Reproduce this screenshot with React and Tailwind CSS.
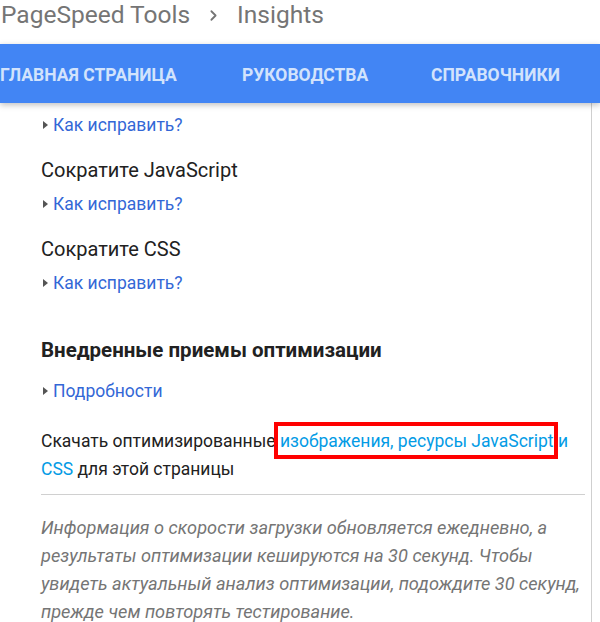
import { ChevronRight } from 'lucide-react';

const Toggle = ({ label, className }) => (
  <div className={`flex items-center text-[17.5px] leading-6 ${className}`}>
    <span className="ml-[2px] mr-[5px] h-0 w-0 border-y-[4px] border-l-[5px] border-y-transparent border-l-[#555]" />
    <a className="text-[#3367d6]">{label}</a>
  </div>
);

export default function App() {
  return (
    <div className="min-h-screen bg-white font-['Roboto',sans-serif] text-[#212121] overflow-hidden">
      {/* Breadcrumb */}
      <div className="flex h-[44px] items-start pl-[1px] text-[24.5px] leading-[30px] text-[#757575]">
        <span>PageSpeed Tools</span>
        <ChevronRight className="mx-[15px] mt-[7px] h-[17px] w-[17px]" strokeWidth={2.5} />
        <span>Insights</span>
      </div>

      {/* Nav */}
      <nav className="relative z-10 flex h-[59px] items-center pt-[3px] bg-[#4285f4] text-[17.5px] font-bold uppercase text-[#d2e3fc] shadow-[0_2px_6px_rgba(0,0,0,0.25)]">
        <span className="w-[242px]">Главная страница</span>
        <span className="w-[189px]">Руководства</span>
        <span>Справочники</span>
      </nav>

      <div className="w-[592px] border-r border-[#cfcfcf] pl-[41px] pr-[6px] pt-[10px] pb-[40px]">
        <Toggle label="Как исправить?" />

        <h3 className="mt-[21px] text-[20px] leading-6">Сократите JavaScript</h3>
        <Toggle label="Как исправить?" className="mt-[10px]" />

        <h3 className="mt-[21px] text-[20px] leading-6">Сократите CSS</h3>
        <Toggle label="Как исправить?" className="mt-[10px]" />

        <h2 className="mt-[43px] text-[20.5px] font-bold leading-6">Внедренные приемы оптимизации</h2>
        <Toggle label="Подробности" className="mt-[17px]" />

        <p className="mt-[24px] text-[17.5px] leading-[28px]">
          Скачать оптимизированные{' '}
          <span className="relative">
            <a className="text-[#039be5]">изображения, ресурсы JavaScript</a>
            <span className="absolute -left-[6px] -right-[4px] -top-[9px] -bottom-[8px] border-4 border-[#ff0000]" />
          </span>{' '}
          <a className="text-[#039be5]">и CSS</a> для этой страницы
        </p>

        <div className="mt-[11px] border-t border-[#d0d0d0]" />

        <p className="mt-[19px] text-[18.2px] italic leading-[28px] text-[#757575]">
          Информация о скорости загрузки обновляется ежедневно, а результаты оптимизации кешируются на 30 секунд. Чтобы увидеть актуальный анализ оптимизации, подождите 30 секунд, прежде чем повторять тестирование.
        </p>
      </div>
    </div>
  );
}
